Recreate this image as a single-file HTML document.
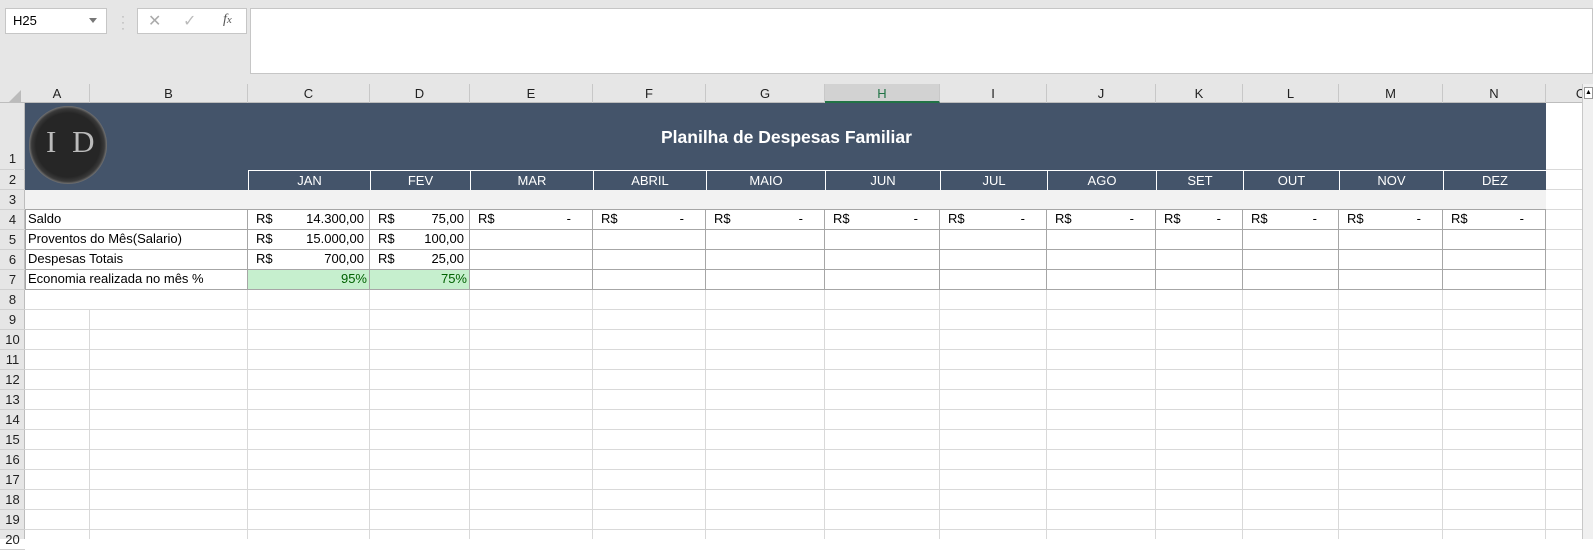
<!DOCTYPE html>
<html><head><meta charset="utf-8"><style>
*{margin:0;padding:0;box-sizing:border-box}
body{width:1593px;height:539px;overflow:hidden;background:#fff;position:relative;font-family:"Liberation Sans",sans-serif;font-size:13px;color:#000}
div{position:absolute}
.t{white-space:nowrap;line-height:20px;height:20px}
.ch{top:84px;height:19px;line-height:19px;text-align:center;color:#222;font-size:13px;border-right:1px solid #c8c8c8}
.rh{left:0;width:25px;text-align:center;color:#222;font-size:13px;line-height:20px;height:20px;border-bottom:1px solid #d0d0d0}
.vl{width:1px;background:#d9d9d9}
.hl{height:1px;background:#d9d9d9;left:25px;width:1557px}
.m{top:170px;height:20px;line-height:20px;text-align:center;color:#fff;border-left:1px solid #fff;border-top:1px solid #fff}
</style></head><body>
<div style="left:0;top:0;width:1593px;height:84px;background:#e6e6e6"></div>
<div style="left:5px;top:8px;width:102px;height:26px;background:#fff;border:1px solid #c6c6c6;line-height:24px;padding-left:7px;font-size:13px">H25</div>
<div style="left:89px;top:18px;width:0;height:0;border-left:4px solid transparent;border-right:4px solid transparent;border-top:5px solid #777"></div>
<div style="left:121px;top:13px;color:#aaa;font-size:12px;line-height:6px">·<br>·<br>·</div>
<div style="left:137px;top:8px;width:110px;height:26px;background:#fff;border:1px solid #c6c6c6"></div>
<div style="left:148px;top:11px;color:#aaa;font-size:16px">✕</div>
<div style="left:183px;top:11px;color:#bbb;font-size:16px">✓</div>
<div style="left:223px;top:12px;color:#555;font-size:14px;font-style:italic;font-family:'Liberation Serif',serif">f<span style="font-size:11px">x</span></div>
<div style="left:250px;top:8px;width:1343px;height:66px;background:#fff;border:1px solid #c6c6c6"></div>
<div style="left:0;top:84px;width:1582px;height:19px;background:#e6e6e6;border-bottom:1px solid #bdbdbd"></div>
<div style="left:9px;top:90px;width:0;height:0;border-left:12px solid transparent;border-bottom:12px solid #bbb"></div>
<div class="ch" style="left:25px;width:65px">A</div>
<div class="ch" style="left:90px;width:158px">B</div>
<div class="ch" style="left:248px;width:122px">C</div>
<div class="ch" style="left:370px;width:100px">D</div>
<div class="ch" style="left:470px;width:123px">E</div>
<div class="ch" style="left:593px;width:113px">F</div>
<div class="ch" style="left:706px;width:119px">G</div>
<div class="ch" style="left:825px;width:115px;background:#d2d2d2;color:#217346;border-bottom:2px solid #217346">H</div>
<div class="ch" style="left:940px;width:107px">I</div>
<div class="ch" style="left:1047px;width:109px">J</div>
<div class="ch" style="left:1156px;width:87px">K</div>
<div class="ch" style="left:1243px;width:96px">L</div>
<div class="ch" style="left:1339px;width:104px">M</div>
<div class="ch" style="left:1443px;width:103px">N</div>
<div class="ch" style="left:1546px;width:36px;text-align:right;overflow:hidden;border:none"><span style="position:relative;left:4px">O</span></div>
<div style="left:1582px;top:84px;width:11px;height:455px;background:#f0f0f0;border-left:1px solid #c8c8c8"></div>
<div style="left:1584px;top:87px;width:9px;height:12px;background:#fff;border:1px solid #999;font-size:7px;line-height:10px;text-align:center">▲</div>
<div style="left:0;top:103px;width:25px;height:436px;background:#e6e6e6;border-right:1px solid #bdbdbd"></div>
<div class="rh" style="top:103px;height:67px;line-height:112px">1</div>
<div class="rh" style="top:170px">2</div>
<div class="rh" style="top:190px">3</div>
<div class="rh" style="top:210px">4</div>
<div class="rh" style="top:230px">5</div>
<div class="rh" style="top:250px">6</div>
<div class="rh" style="top:270px">7</div>
<div class="rh" style="top:290px">8</div>
<div class="rh" style="top:310px">9</div>
<div class="rh" style="top:330px">10</div>
<div class="rh" style="top:350px">11</div>
<div class="rh" style="top:370px">12</div>
<div class="rh" style="top:390px">13</div>
<div class="rh" style="top:410px">14</div>
<div class="rh" style="top:430px">15</div>
<div class="rh" style="top:450px">16</div>
<div class="rh" style="top:470px">17</div>
<div class="rh" style="top:490px">18</div>
<div class="rh" style="top:510px">19</div>
<div class="rh" style="top:530px">20</div>
<div class="vl" style="left:89px;top:310px;height:229px"></div>
<div class="vl" style="left:247px;top:290px;height:249px"></div>
<div class="vl" style="left:369px;top:290px;height:249px"></div>
<div class="vl" style="left:469px;top:290px;height:249px"></div>
<div class="vl" style="left:592px;top:290px;height:249px"></div>
<div class="vl" style="left:705px;top:290px;height:249px"></div>
<div class="vl" style="left:824px;top:290px;height:249px"></div>
<div class="vl" style="left:939px;top:290px;height:249px"></div>
<div class="vl" style="left:1046px;top:290px;height:249px"></div>
<div class="vl" style="left:1155px;top:290px;height:249px"></div>
<div class="vl" style="left:1242px;top:290px;height:249px"></div>
<div class="vl" style="left:1338px;top:290px;height:249px"></div>
<div class="vl" style="left:1442px;top:290px;height:249px"></div>
<div class="vl" style="left:1545px;top:103px;height:436px"></div>
<div class="hl" style="top:309px"></div><div class="hl" style="top:329px"></div><div class="hl" style="top:349px"></div>
<div class="hl" style="top:369px"></div><div class="hl" style="top:389px"></div><div class="hl" style="top:409px"></div>
<div class="hl" style="top:429px"></div><div class="hl" style="top:449px"></div><div class="hl" style="top:469px"></div>
<div class="hl" style="top:489px"></div><div class="hl" style="top:509px"></div><div class="hl" style="top:529px"></div>
<div class="hl" style="left:1546px;width:36px;top:169px"></div><div class="hl" style="left:1546px;width:36px;top:189px"></div>
<div class="hl" style="left:1546px;width:36px;top:209px"></div><div class="hl" style="left:1546px;width:36px;top:229px"></div>
<div class="hl" style="left:1546px;width:36px;top:249px"></div><div class="hl" style="left:1546px;width:36px;top:269px"></div>
<div class="hl" style="left:1546px;width:36px;top:289px"></div>
<div style="left:25px;top:103px;width:1521px;height:87px;background:#44546a"></div>
<div style="left:25px;top:190px;width:1521px;height:20px;background:#f2f2f2"></div>
<div style="left:29px;top:106px;width:78px;height:78px;border-radius:50%;background:radial-gradient(circle,#262626 58%,#3a3a3a 66%,#aaa 75%,#6a7280 90%,rgba(68,84,106,0) 100%)"></div>
<div style="left:46px;top:122px;color:#bbb;font-family:'Liberation Serif',serif;font-size:31px;line-height:40px;letter-spacing:4px">I D</div>
<div class="t" style="left:661px;top:125px;height:24px;line-height:24px;color:#fff;font-weight:bold;font-size:17.5px">Planilha de Despesas Familiar</div>
<div class="m" style="left:248px;width:122px">JAN</div>
<div class="m" style="left:370px;width:100px">FEV</div>
<div class="m" style="left:470px;width:123px">MAR</div>
<div class="m" style="left:593px;width:113px">ABRIL</div>
<div class="m" style="left:706px;width:119px">MAIO</div>
<div class="m" style="left:825px;width:115px">JUN</div>
<div class="m" style="left:940px;width:107px">JUL</div>
<div class="m" style="left:1047px;width:109px">AGO</div>
<div class="m" style="left:1156px;width:87px">SET</div>
<div class="m" style="left:1243px;width:96px">OUT</div>
<div class="m" style="left:1339px;width:104px">NOV</div>
<div class="m" style="left:1443px;width:103px">DEZ</div>
<div style="left:248px;top:270px;width:221px;height:20px;background:#c6efce"></div>
<div style="left:25px;top:209px;width:1521px;height:1px;background:#a6a6a6"></div>
<div style="left:25px;top:229px;width:1521px;height:1px;background:#a6a6a6"></div>
<div style="left:25px;top:249px;width:1521px;height:1px;background:#a6a6a6"></div>
<div style="left:25px;top:269px;width:1521px;height:1px;background:#a6a6a6"></div>
<div style="left:25px;top:289px;width:1521px;height:1px;background:#a6a6a6"></div>
<div style="left:247px;top:210px;width:1px;height:80px;background:#a6a6a6"></div>
<div style="left:369px;top:210px;width:1px;height:80px;background:#a6a6a6"></div>
<div style="left:469px;top:210px;width:1px;height:80px;background:#a6a6a6"></div>
<div style="left:592px;top:210px;width:1px;height:80px;background:#a6a6a6"></div>
<div style="left:705px;top:210px;width:1px;height:80px;background:#a6a6a6"></div>
<div style="left:824px;top:210px;width:1px;height:80px;background:#a6a6a6"></div>
<div style="left:939px;top:210px;width:1px;height:80px;background:#a6a6a6"></div>
<div style="left:1046px;top:210px;width:1px;height:80px;background:#a6a6a6"></div>
<div style="left:1155px;top:210px;width:1px;height:80px;background:#a6a6a6"></div>
<div style="left:1242px;top:210px;width:1px;height:80px;background:#a6a6a6"></div>
<div style="left:1338px;top:210px;width:1px;height:80px;background:#a6a6a6"></div>
<div style="left:1442px;top:210px;width:1px;height:80px;background:#a6a6a6"></div>
<div style="left:1545px;top:210px;width:1px;height:80px;background:#a6a6a6"></div>
<div style="left:25px;top:210px;width:1px;height:80px;background:#a6a6a6"></div>
<div class="t" style="left:28px;top:209px">Saldo</div>
<div class="t" style="left:28px;top:229px">Proventos do Mês(Salario)</div>
<div class="t" style="left:28px;top:249px">Despesas Totais</div>
<div class="t" style="left:28px;top:269px">Economia realizada no mês %</div>
<div class="t" style="left:256px;top:209px">R$</div><div class="t" style="left:248px;width:116px;text-align:right;top:209px">14.300,00</div>
<div class="t" style="left:256px;top:229px">R$</div><div class="t" style="left:248px;width:116px;text-align:right;top:229px">15.000,00</div>
<div class="t" style="left:256px;top:249px">R$</div><div class="t" style="left:248px;width:116px;text-align:right;top:249px">700,00</div>
<div class="t" style="left:248px;width:119px;text-align:right;top:269px;color:#006100">95%</div>
<div class="t" style="left:378px;top:209px">R$</div><div class="t" style="left:370px;width:94px;text-align:right;top:209px">75,00</div>
<div class="t" style="left:378px;top:229px">R$</div><div class="t" style="left:370px;width:94px;text-align:right;top:229px">100,00</div>
<div class="t" style="left:378px;top:249px">R$</div><div class="t" style="left:370px;width:94px;text-align:right;top:249px">25,00</div>
<div class="t" style="left:370px;width:97px;text-align:right;top:269px;color:#006100">75%</div>
<div class="t" style="left:478px;top:209px">R$</div><div class="t" style="left:470px;width:101px;text-align:right;top:209px">-</div>
<div class="t" style="left:601px;top:209px">R$</div><div class="t" style="left:593px;width:91px;text-align:right;top:209px">-</div>
<div class="t" style="left:714px;top:209px">R$</div><div class="t" style="left:706px;width:97px;text-align:right;top:209px">-</div>
<div class="t" style="left:833px;top:209px">R$</div><div class="t" style="left:825px;width:93px;text-align:right;top:209px">-</div>
<div class="t" style="left:948px;top:209px">R$</div><div class="t" style="left:940px;width:85px;text-align:right;top:209px">-</div>
<div class="t" style="left:1055px;top:209px">R$</div><div class="t" style="left:1047px;width:87px;text-align:right;top:209px">-</div>
<div class="t" style="left:1164px;top:209px">R$</div><div class="t" style="left:1156px;width:65px;text-align:right;top:209px">-</div>
<div class="t" style="left:1251px;top:209px">R$</div><div class="t" style="left:1243px;width:74px;text-align:right;top:209px">-</div>
<div class="t" style="left:1347px;top:209px">R$</div><div class="t" style="left:1339px;width:82px;text-align:right;top:209px">-</div>
<div class="t" style="left:1451px;top:209px">R$</div><div class="t" style="left:1443px;width:81px;text-align:right;top:209px">-</div>
</body></html>
